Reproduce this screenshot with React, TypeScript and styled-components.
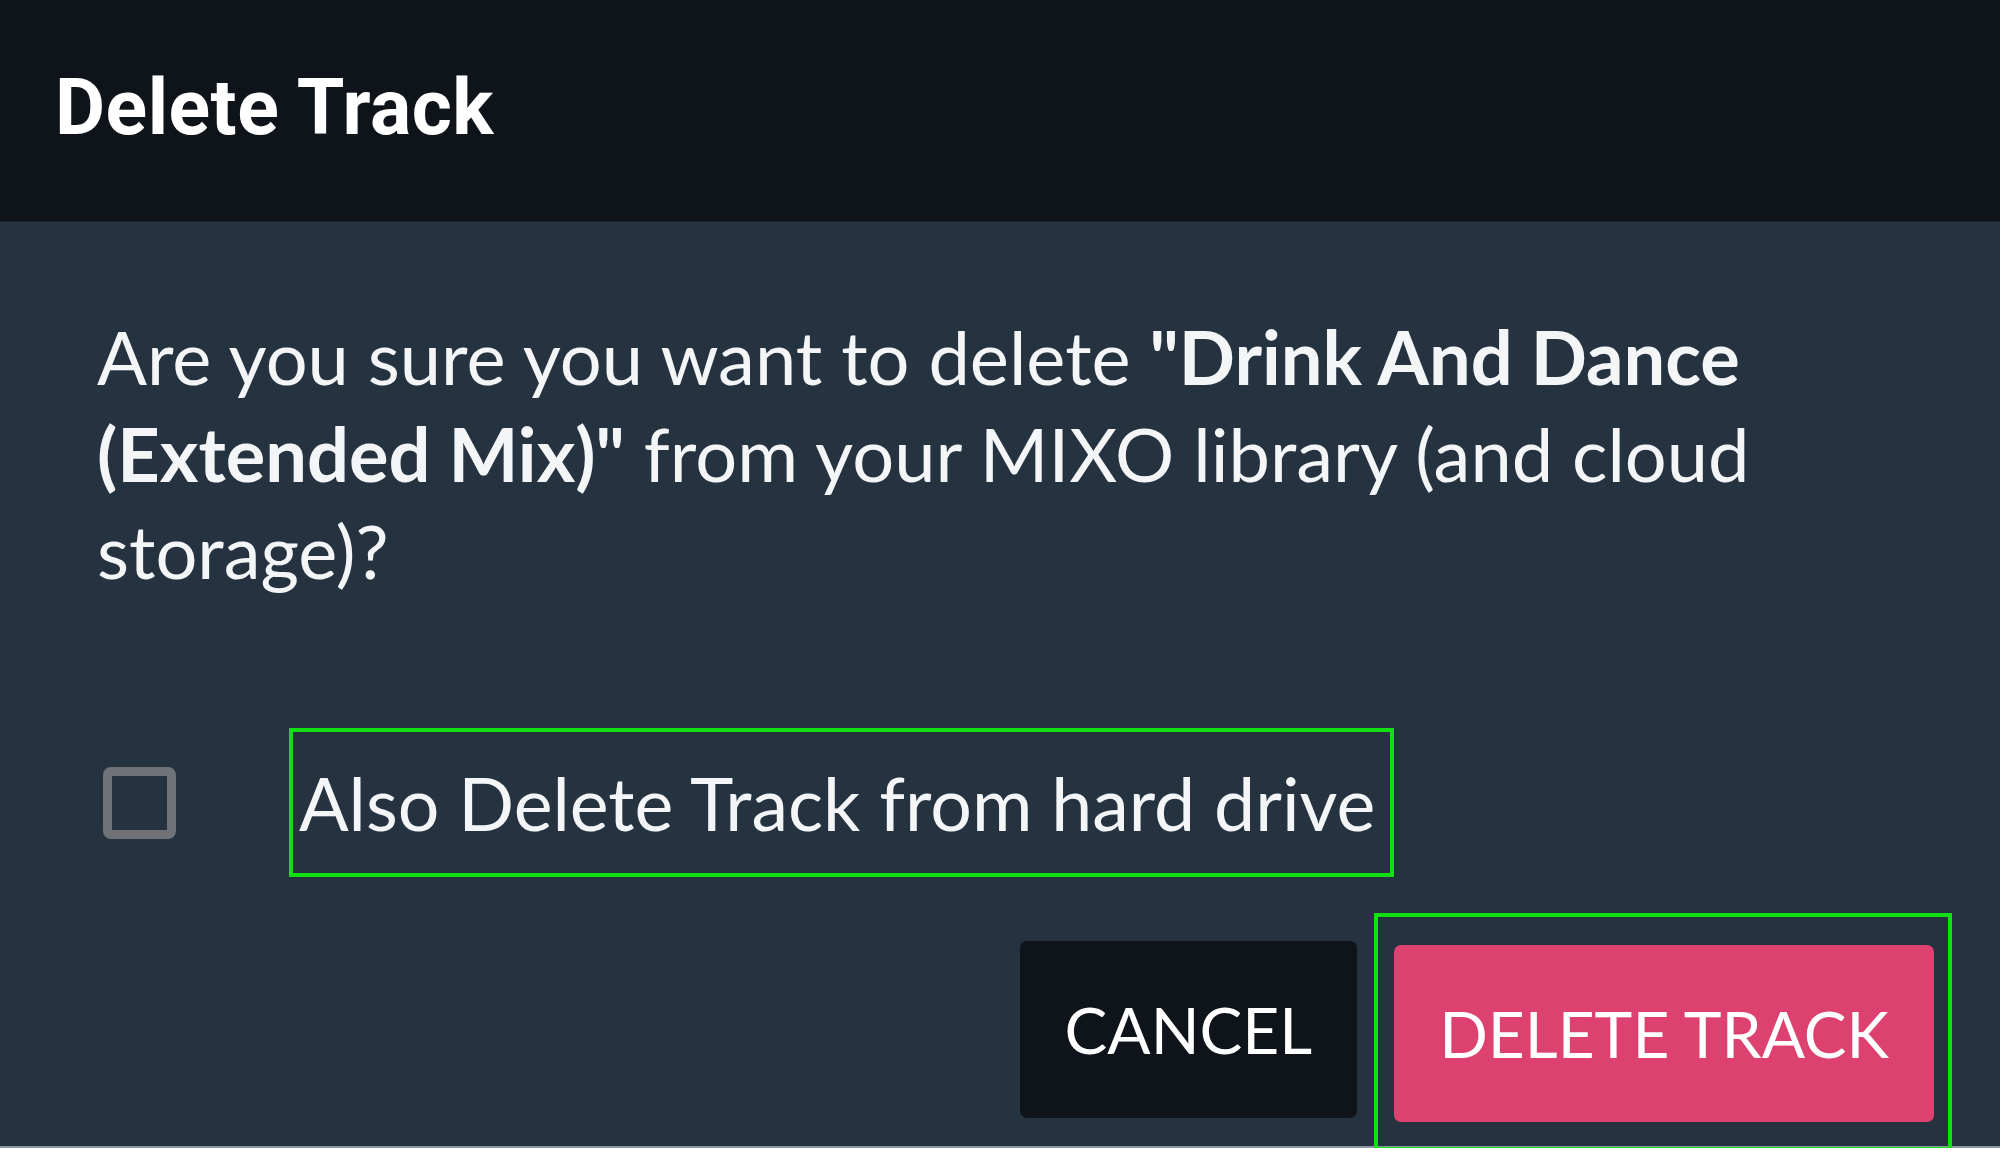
import React from "react";
import styled, { createGlobalStyle } from "styled-components";

const Global = createGlobalStyle`
  html, body { margin: 0; padding: 0; background: #ffffff; }
  * { box-sizing: border-box; }
`;

const Dialog = styled.div`
  width: 2000px;
  display: flex;
  flex-direction: column;
  font-family: Lato, "Open Sans", sans-serif;
  font-weight: 400;
  color: #ffffff;
`;

const Header = styled.header`
  height: 222px;
  background: #0f141b;
  border-bottom: 1px solid #1a222c;
  display: flex;
  align-items: center;
  padding: 0 0 6px 55px;
`;

const Title = styled.h1`
  margin: 0;
  font-family: Roboto, "Liberation Sans", sans-serif;
  font-weight: 700;
  font-size: 77px;
  letter-spacing: 0.5px;
  color: #ffffff;
`;

const Body = styled.section`
  height: 926px;
  background: #253240;
  border-bottom: 2px solid #8b95a3;
  padding: 86px 48px 0 97px;
  display: flex;
  flex-direction: column;
`;

const Message = styled.p`
  margin: 0;
  width: 1700px;
  font-size: 74px;
  line-height: 97px;
  color: #f4f5f7;
`;

const Name = styled.strong`
  font-weight: 700;
`;

const CheckRow = styled.label`
  display: flex;
  align-items: center;
  gap: 113px;
  margin-top: 129px;
  padding-left: 6px;
`;

const Box = styled.span`
  width: 73px;
  height: 72px;
  border: 9px solid #6f7378;
  border-radius: 8px;
  flex: none;
`;

const Highlight = styled.span`
  border: 4px solid #12e012;
  display: flex;
  align-items: center;
`;

const CheckText = styled(Highlight)`
  height: 149px;
  padding: 0 15px 0 6px;
  font-size: 73.5px;
  color: #f4f5f7;
`;

const Actions = styled.div`
  display: flex;
  justify-content: flex-end;
  align-items: center;
  gap: 17px;
  margin-top: 36px;
`;

const Button = styled.button<{ $variant: "dark" | "danger" }>`
  height: 177px;
  padding: 0 45px;
  border: none;
  border-radius: 7px;
  font-family: Lato, "Open Sans", sans-serif;
  font-weight: 400;
  font-size: 64px;
  color: #ffffff;
  background: ${(p) => (p.$variant === "danger" ? "#dc416f" : "#0f141b")};
`;

const ButtonFrame = styled(Highlight)`
  padding: 28px 14px 25px 16px;
  margin-bottom: -6px;
`;

export default function App() {
  return (
    <>
      <Global />
      <Dialog>
        <Header>
          <Title>Delete Track</Title>
        </Header>
        <Body>
          <Message>
            <span>Are you sure you want to delete</span>{" "}
            <Name>"Drink And Dance</Name> <Name>(Extended Mix)"</Name>{" "}
            <span>from your MIXO library (and cloud</span>{" "}
            <span>storage)?</span>
          </Message>
          <CheckRow>
            <Box />
            <CheckText>Also Delete Track from hard drive</CheckText>
          </CheckRow>
          <Actions>
            <Button $variant="dark">CANCEL</Button>
            <ButtonFrame>
              <Button $variant="danger">DELETE TRACK</Button>
            </ButtonFrame>
          </Actions>
        </Body>
      </Dialog>
    </>
  );
}
